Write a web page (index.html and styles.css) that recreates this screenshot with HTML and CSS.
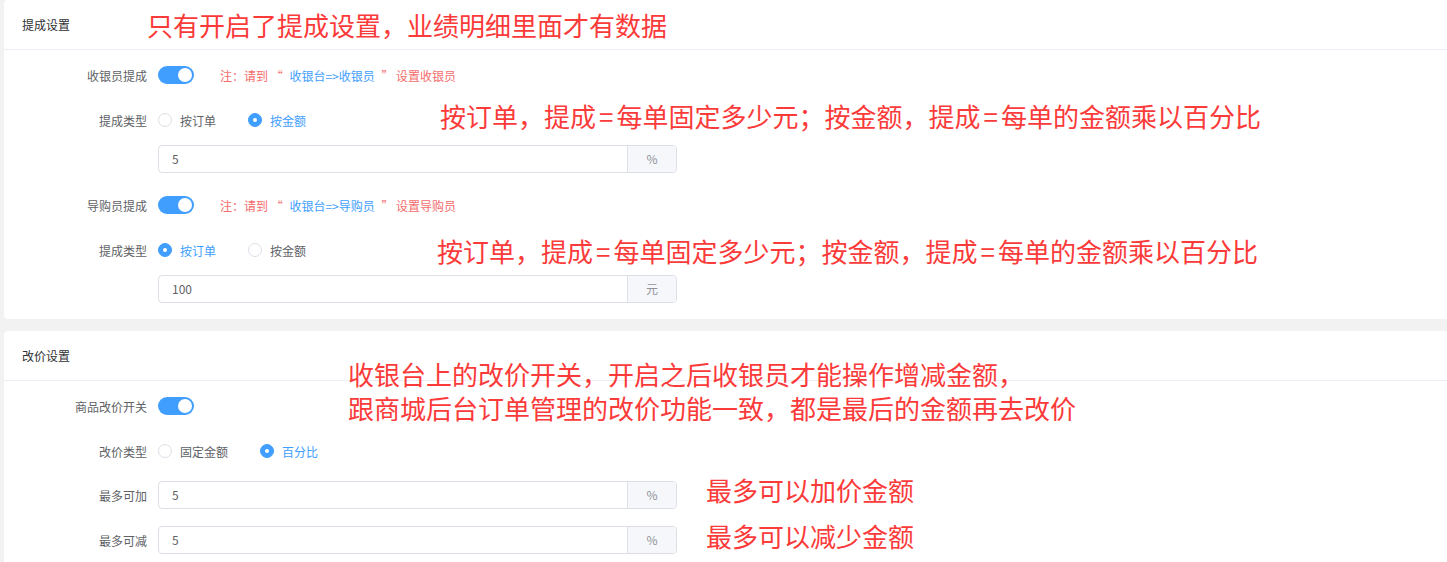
FILE: index.html
```html
<html>
  <head>
    <meta charset="utf-8">
    <link rel="stylesheet" href="styles.css">
  </head>
  <body>
    <div class="page">
      <div class="card">
        <div class="card-head">提成设置</div>
        <div class="card-body">
          <div class="item">
            <div class="label">收银员提成</div>
            <span class="switch on"><span class="knob"></span></span>
            <span class="note">注：请到 “ <span class="link">收银台=&gt;收银员</span> ” 设置收银员</span>
          </div>
          <div class="item tight">
            <div class="label">提成类型</div>
            <label class="radio"><span class="dot"></span>按订单</label>
            <label class="radio checked"><span class="dot"></span>按金额</label>
          </div>
          <div class="item sep">
            <div class="label"></div>
            <div class="input">
              <span class="value">5</span>
              <span class="append">%</span>
            </div>
          </div>
          <div class="item">
            <div class="label">导购员提成</div>
            <span class="switch on"><span class="knob"></span></span>
            <span class="note">注：请到 “ <span class="link">收银台=&gt;导购员</span> ” 设置导购员</span>
          </div>
          <div class="item tight">
            <div class="label">提成类型</div>
            <label class="radio checked"><span class="dot"></span>按订单</label>
            <label class="radio"><span class="dot"></span>按金额</label>
          </div>
          <div class="item last">
            <div class="label"></div>
            <div class="input">
              <span class="value">100</span>
              <span class="append">元</span>
            </div>
          </div>
        </div>
      </div>

      <div class="card">
        <div class="card-head">改价设置</div>
        <div class="card-body">
          <div class="item">
            <div class="label">商品改价开关</div>
            <span class="switch on"><span class="knob"></span></span>
          </div>
          <div class="item wide">
            <div class="label">改价类型</div>
            <label class="radio"><span class="dot"></span>固定金额</label>
            <label class="radio checked"><span class="dot"></span>百分比</label>
          </div>
          <div class="item">
            <div class="label">最多可加</div>
            <div class="input">
              <span class="value">5</span>
              <span class="append">%</span>
            </div>
          </div>
          <div class="item">
            <div class="label">最多可减</div>
            <div class="input">
              <span class="value">5</span>
              <span class="append">%</span>
            </div>
          </div>
        </div>
      </div>

      <!-- red notes drawn over the screenshot -->
      <div class="mark m1">只有开启了提成设置，业绩明细里面才有数据</div>
      <div class="mark m2">按订单，提成<span class="eq">=</span>每单固定多少元；按金额，提成<span class="eq">=</span>每单的金额乘以百分比</div>
      <div class="mark m3">按订单，提成<span class="eq">=</span>每单固定多少元；按金额，提成<span class="eq">=</span>每单的金额乘以百分比</div>
      <div class="mark m4">收银台上的改价开关，开启之后收银员才能操作增减金额，<br>跟商城后台订单管理的改价功能一致，都是最后的金额再去改价</div>
      <div class="mark m5">最多可以加价金额</div>
      <div class="mark m6">最多可以减少金额</div>
    </div>
  </body>
</html>
```

FILE: styles.css
```css
body
{
    margin: 0;
    background-color: #f2f2f2;
    font-family: "Noto Sans CJK SC", "Noto Sans", sans-serif;
    font-size: 12px;
    color: #606266;
}

.page
{
    position: relative;
    padding: 0 0 40px 4px;
}

.card
{
    background-color: #fff;
    border-radius: 4px 0 0 4px;
    margin-bottom: 12px;
}

.card-head
{
    height: 49px;
    line-height: 49px;
    padding-left: 18px;
    border-bottom: 1px solid #ebeef5;
    color: #303133;
}

.card-body
{
    padding: 11px 0 16px 0;
}

.item
{
    display: flex;
    align-items: center;
    height: 28px;
    margin-bottom: 17px;
}
.item.tight { margin-bottom: 11px; }
.item.sep { margin-bottom: 18px; }
.item.wide { margin-bottom: 16px; }
.item.last { margin-bottom: 0; }

.label
{
    width: 154px;
    box-sizing: border-box;
    padding-right: 11px;
    text-align: right;
    color: #606266;
}

.switch
{
    position: relative;
    display: inline-block;
    width: 36px;
    height: 18px;
    border-radius: 9px;
    background-color: #dcdfe6;
}
.switch.on { background-color: #409eff; }

.switch .knob
{
    position: absolute;
    top: 2px;
    left: 2px;
    width: 14px;
    height: 14px;
    border-radius: 50%;
    background-color: #fff;
}
.switch.on .knob { left: 20px; }

.note
{
    margin-left: 26px;
    color: #f56c6c;
}
.note .link
{
    margin: 0 4px;
    color: #409eff;
}

.radio
{
    display: flex;
    align-items: center;
    margin-right: 32px;
    color: #606266;
}
.radio .dot
{
    box-sizing: border-box;
    width: 14px;
    height: 14px;
    margin-right: 8px;
    border: 1px solid #dcdfe6;
    border-radius: 50%;
    background-color: #fff;
    position: relative;
}
.radio.checked { color: #409eff; }
.radio.checked .dot
{
    border-color: #409eff;
    background-color: #409eff;
}
.radio.checked .dot::after
{
    content: "";
    position: absolute;
    left: 4px;
    top: 4px;
    width: 4px;
    height: 4px;
    border-radius: 50%;
    background-color: #fff;
}

.input
{
    display: flex;
    width: 519px;
    height: 28px;
    box-sizing: border-box;
    border: 1px solid #dcdfe6;
    border-radius: 4px;
    overflow: hidden;
}
.input .value
{
    flex: 1;
    line-height: 26px;
    padding-left: 13px;
    color: #606266;
}
.input .append
{
    width: 48px;
    line-height: 26px;
    text-align: center;
    border-left: 1px solid #dcdfe6;
    background-color: #f5f7fa;
    color: #909399;
}

.mark
{
    position: absolute;
    font-size: 26px;
    line-height: 34px;
    color: #fb3a3a;
    white-space: nowrap;
}
.mark .eq { margin: 0 3px; }
.m1 { left: 147px; top: 8px; }
.m2 { left: 440px; top: 99px; }
.m3 { left: 437px; top: 234px; }
.m4 { left: 348px; top: 357px; }
.m5 { left: 706px; top: 473px; }
.m6 { left: 706px; top: 519px; }
```
